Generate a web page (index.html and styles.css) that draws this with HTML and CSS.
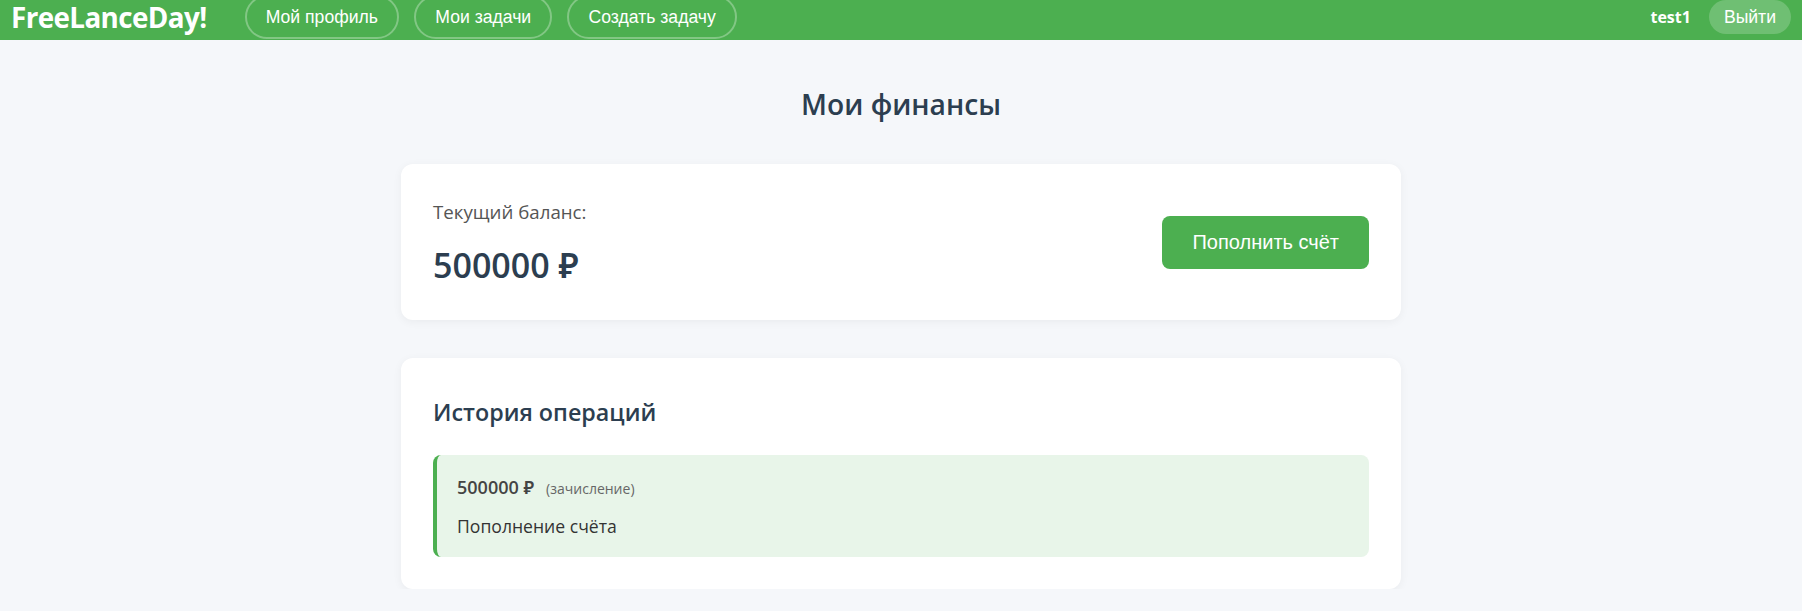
FILE: index.html
```html
<!DOCTYPE html>
<html lang="ru">
<head>
<meta charset="utf-8">
<title>Мои финансы — FreeLanceDay!</title>
<link rel="stylesheet" href="styles.css">
</head>
<body>
<header class="topbar">
  <a class="brand" href="#">FreeLanceDay!</a>
  <nav class="nav">
    <a class="nav-link" href="#">Мой профиль</a>
    <a class="nav-link" href="#">Мои задачи</a>
    <a class="nav-link" href="#">Создать задачу</a>
  </nav>
  <div class="user">
    <span class="username">test1</span>
    <a class="logout" href="#">Выйти</a>
  </div>
</header>
<main class="container">
  <h1 class="page-title">Мои финансы</h1>
  <section class="card balance-card">
    <div class="balance-info">
      <div class="balance-label">Текущий баланс:</div>
      <div class="balance-amount">500000 ₽</div>
    </div>
    <button class="btn-primary">Пополнить счёт</button>
  </section>
  <section class="card history-card">
    <h2 class="card-title">История операций</h2>
    <div class="tx tx-income">
      <div class="tx-head"><span class="tx-amount">500000 ₽</span><span class="tx-type">(зачисление)</span></div>
      <div class="tx-desc">Пополнение счёта</div>
    </div>
  </section>
</main>
</body>
</html>
```
FILE: styles.css
```css
* { box-sizing: border-box; }
body {
  margin: 0;
  background: #f5f7fa;
  font-family: "Open Sans", "Noto Sans", sans-serif;
  color: #2c3e50;
}
.topbar {
  height: 40px;
  background: #4caf50;
  display: flex;
  align-items: center;
  padding: 0 11px 6px 11px;
}
.brand {
  color: #fff;
  text-decoration: none;
  font-weight: 700;
  font-size: 27.8px;
  line-height: 34px;
  letter-spacing: -0.6px;
  margin-right: 38px;
}
.nav { display: flex; gap: 15px; }
.nav-link {
  font-family: "Liberation Sans", Arial, sans-serif;
  font-size: 17.6px;
  line-height: 20px;
  color: #fff;
  text-decoration: none;
  padding: 10px 19.2px;
  border: 2px solid rgba(255,255,255,0.3);
  border-radius: 24px;
}
.user { margin-left: auto; display: flex; align-items: center; gap: 18px; }
.username { color: #fff; font-weight: 700; font-size: 16px; }
.logout {
  font-family: "Liberation Sans", Arial, sans-serif;
  font-size: 17.6px;
  line-height: 20px;
  color: #fff;
  text-decoration: none;
  padding: 7px 15px;
  background: rgba(255,255,255,0.2);
  border-radius: 20px;
}
.container { max-width: 1000px; margin: 0 auto; }
.page-title {
  text-align: center;
  font-size: 28.2px;
  font-weight: 600;
  line-height: 40px;
  margin: 44px 0 40px;
}
.card {
  background: #fff;
  border-radius: 12px;
  box-shadow: 0 2px 10px rgba(0,0,0,0.05);
  padding: 32px;
}
.balance-card {
  display: flex;
  align-items: center;
  justify-content: space-between;
  margin-bottom: 38px;
}
.balance-label { font-size: 18.7px; line-height: 32px; color: #555; margin-bottom: 14px; }
.balance-amount { font-size: 34px; line-height: 46px; font-weight: 600; color: #2c3e50; }
.btn-primary {
  font-family: "Liberation Sans", Arial, sans-serif;
  font-size: 20px;
  line-height: 21px;
  color: #fff;
  background: #4caf50;
  border: 0;
  border-radius: 8px;
  padding: 16px 30px;
}
.card-title { font-size: 23.3px; font-weight: 600; line-height: 44px; margin: 0 0 21px; }
.tx {
  background: #e8f5e9;
  border-left: 4px solid #4caf50;
  border-radius: 8px;
  padding: 20px 20px 19px;
}
.tx-head { margin-bottom: 13px; line-height: 24px; }
.tx-amount { font-size: 18px; font-weight: 600; color: #444; }
.tx-type { font-size: 14px; color: #666; margin-left: 12px; }
.tx-desc { font-size: 17.6px; line-height: 24px; color: #333; }
```
